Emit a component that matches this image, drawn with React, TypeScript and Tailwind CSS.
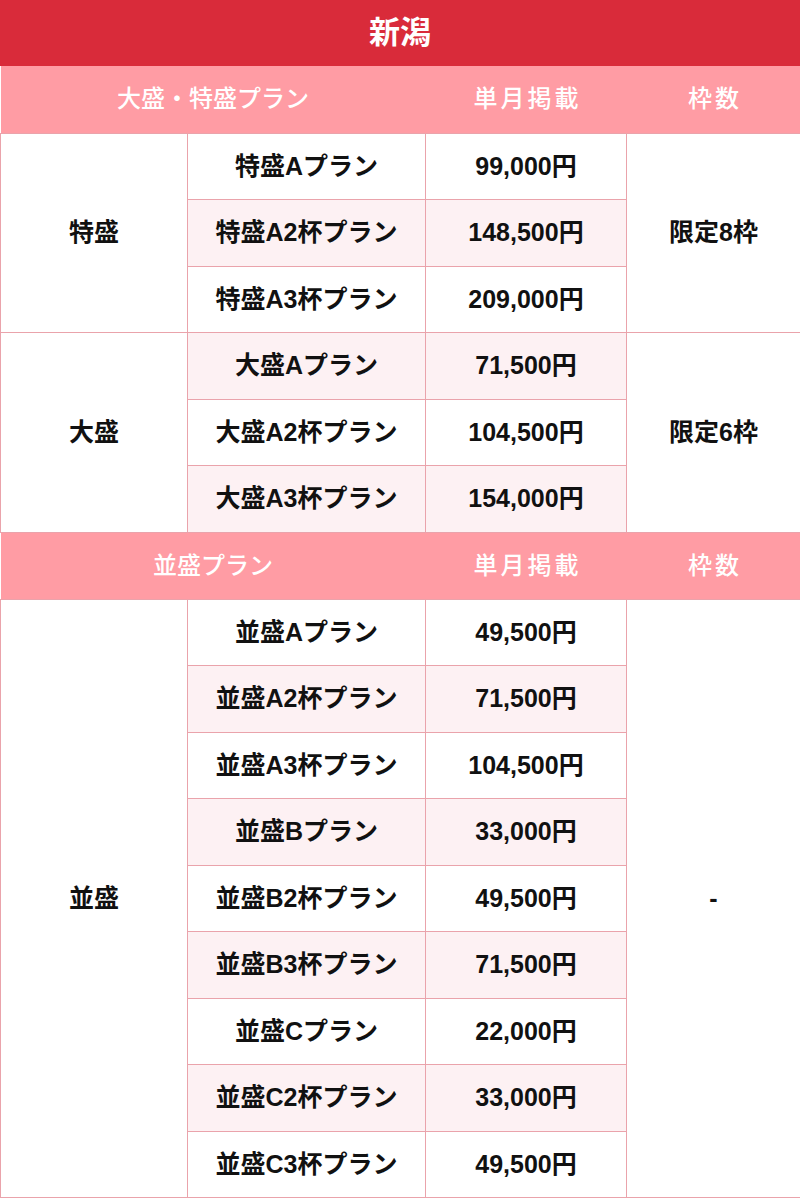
type Plan = { name: string; price: string }
type Group = { label: string; limit: string; plans: Plan[] }
type Section = { title: string; groups: Group[] }

const sections: Section[] = [
  {
    title: '大盛・特盛プラン',
    groups: [
      {
        label: '特盛',
        limit: '限定8枠',
        plans: [
          { name: '特盛Aプラン', price: '99,000円' },
          { name: '特盛A2杯プラン', price: '148,500円' },
          { name: '特盛A3杯プラン', price: '209,000円' },
        ],
      },
      {
        label: '大盛',
        limit: '限定6枠',
        plans: [
          { name: '大盛Aプラン', price: '71,500円' },
          { name: '大盛A2杯プラン', price: '104,500円' },
          { name: '大盛A3杯プラン', price: '154,000円' },
        ],
      },
    ],
  },
  {
    title: '並盛プラン',
    groups: [
      {
        label: '並盛',
        limit: '-',
        plans: [
          { name: '並盛Aプラン', price: '49,500円' },
          { name: '並盛A2杯プラン', price: '71,500円' },
          { name: '並盛A3杯プラン', price: '104,500円' },
          { name: '並盛Bプラン', price: '33,000円' },
          { name: '並盛B2杯プラン', price: '49,500円' },
          { name: '並盛B3杯プラン', price: '71,500円' },
          { name: '並盛Cプラン', price: '22,000円' },
          { name: '並盛C2杯プラン', price: '33,000円' },
          { name: '並盛C3杯プラン', price: '49,500円' },
        ],
      },
    ],
  },
]

const cell = 'border border-[#eaa3ab] text-center align-middle'

export default function App() {
  return (
    <div
      className="w-[800px] bg-white text-[#111]"
      style={{ fontFamily: '"Liberation Sans", "Noto Sans CJK JP", sans-serif' }}
    >
      <div className="h-[66px] bg-[#d92b3a] flex items-center justify-center text-white text-[31px] font-bold">
        新潟
      </div>
      <table className="w-full table-fixed border-collapse">
        <colgroup>
          <col className="w-[187px]" />
          <col className="w-[238px]" />
          <col className="w-[201px]" />
          <col className="w-[174px]" />
        </colgroup>
        {sections.map((s) => {
          // row striping restarts per section
          let idx = 0
          return (
            <tbody key={s.title}>
              <tr className="h-[67px] bg-[#ff9ca4] text-white text-[24px] font-medium">
                <td colSpan={2} className="text-center">{s.title}</td>
                <td className="text-center tracking-[3px] pl-[3px]">単月掲載</td>
                <td className="text-center tracking-[3px] pl-[3px]">枠数</td>
              </tr>
              {s.groups.map((g) =>
                g.plans.map((p, i) => {
                  const striped = idx++ % 2 === 1
                  const bg = striped ? 'bg-[#fdf1f3]' : 'bg-white'
                  return (
                    <tr key={p.name} className="h-[66.5px] text-[25px] font-bold">
                      {i === 0 && (
                        <td rowSpan={g.plans.length} className={`${cell} bg-white`}>
                          {g.label}
                        </td>
                      )}
                      <td className={`${cell} ${bg}`}>{p.name}</td>
                      <td className={`${cell} ${bg}`}>{p.price}</td>
                      {i === 0 && (
                        <td rowSpan={g.plans.length} className={`${cell} bg-white`}>
                          {g.limit}
                        </td>
                      )}
                    </tr>
                  )
                })
              )}
            </tbody>
          )
        })}
      </table>
    </div>
  )
}
